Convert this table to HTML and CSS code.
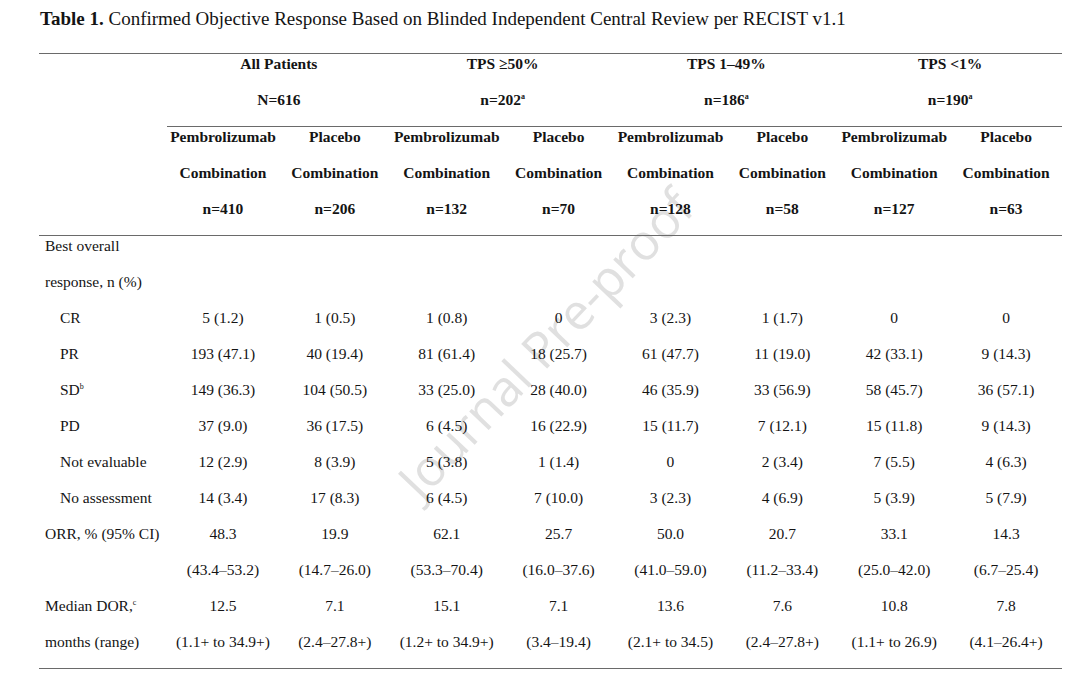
FILE: index.html
```html
<!DOCTYPE html>
<html lang="en">
<head>
<meta charset="utf-8">
<title>Table 1</title>
<link rel="stylesheet" href="styles.css">
</head>
<body>
<div class="page">
  <div class="watermark">Journal Pre-proof</div>
  <div class="title"><b>Table 1.</b> Confirmed Objective Response Based on Blinded Independent Central Review per RECIST v1.1</div>
  <div class="table">
    <div class="rule full"></div>

    <div class="cell label"></div>
    <div class="cell th group">All Patients</div>
    <div class="cell th group">TPS ≥50%</div>
    <div class="cell th group">TPS 1–49%</div>
    <div class="cell th group">TPS &lt;1%</div>

    <div class="cell label"></div>
    <div class="cell th group">N=616</div>
    <div class="cell th group">n=202<sup>a</sup></div>
    <div class="cell th group">n=186<sup>a</sup></div>
    <div class="cell th group">n=190<sup>a</sup></div>

    <div class="rule part"></div>

    <div class="cell label"></div>
    <div class="cell th">Pembrolizumab</div>
    <div class="cell th">Placebo</div>
    <div class="cell th">Pembrolizumab</div>
    <div class="cell th">Placebo</div>
    <div class="cell th">Pembrolizumab</div>
    <div class="cell th">Placebo</div>
    <div class="cell th">Pembrolizumab</div>
    <div class="cell th">Placebo</div>

    <div class="cell label"></div>
    <div class="cell th">Combination</div>
    <div class="cell th">Combination</div>
    <div class="cell th">Combination</div>
    <div class="cell th">Combination</div>
    <div class="cell th">Combination</div>
    <div class="cell th">Combination</div>
    <div class="cell th">Combination</div>
    <div class="cell th">Combination</div>

    <div class="cell label"></div>
    <div class="cell th">n=410</div>
    <div class="cell th">n=206</div>
    <div class="cell th">n=132</div>
    <div class="cell th">n=70</div>
    <div class="cell th">n=128</div>
    <div class="cell th">n=58</div>
    <div class="cell th">n=127</div>
    <div class="cell th">n=63</div>

    <div class="rule full"></div>

    <div class="cell label wide">Best overall</div>
    <div class="cell label wide">response, n (%)</div>

    <div class="cell label sub">CR</div>
    <div class="cell">5 (1.2)</div><div class="cell">1 (0.5)</div><div class="cell">1 (0.8)</div><div class="cell">0</div>
    <div class="cell">3 (2.3)</div><div class="cell">1 (1.7)</div><div class="cell">0</div><div class="cell">0</div>

    <div class="cell label sub">PR</div>
    <div class="cell">193 (47.1)</div><div class="cell">40 (19.4)</div><div class="cell">81 (61.4)</div><div class="cell">18 (25.7)</div>
    <div class="cell">61 (47.7)</div><div class="cell">11 (19.0)</div><div class="cell">42 (33.1)</div><div class="cell">9 (14.3)</div>

    <div class="cell label sub">SD<sup>b</sup></div>
    <div class="cell">149 (36.3)</div><div class="cell">104 (50.5)</div><div class="cell">33 (25.0)</div><div class="cell">28 (40.0)</div>
    <div class="cell">46 (35.9)</div><div class="cell">33 (56.9)</div><div class="cell">58 (45.7)</div><div class="cell">36 (57.1)</div>

    <div class="cell label sub">PD</div>
    <div class="cell">37 (9.0)</div><div class="cell">36 (17.5)</div><div class="cell">6 (4.5)</div><div class="cell">16 (22.9)</div>
    <div class="cell">15 (11.7)</div><div class="cell">7 (12.1)</div><div class="cell">15 (11.8)</div><div class="cell">9 (14.3)</div>

    <div class="cell label sub">Not evaluable</div>
    <div class="cell">12 (2.9)</div><div class="cell">8 (3.9)</div><div class="cell">5 (3.8)</div><div class="cell">1 (1.4)</div>
    <div class="cell">0</div><div class="cell">2 (3.4)</div><div class="cell">7 (5.5)</div><div class="cell">4 (6.3)</div>

    <div class="cell label sub">No assessment</div>
    <div class="cell">14 (3.4)</div><div class="cell">17 (8.3)</div><div class="cell">6 (4.5)</div><div class="cell">7 (10.0)</div>
    <div class="cell">3 (2.3)</div><div class="cell">4 (6.9)</div><div class="cell">5 (3.9)</div><div class="cell">5 (7.9)</div>

    <div class="cell label">ORR, % (95% CI)</div>
    <div class="cell">48.3</div><div class="cell">19.9</div><div class="cell">62.1</div><div class="cell">25.7</div>
    <div class="cell">50.0</div><div class="cell">20.7</div><div class="cell">33.1</div><div class="cell">14.3</div>

    <div class="cell label"></div>
    <div class="cell">(43.4–53.2)</div><div class="cell">(14.7–26.0)</div><div class="cell">(53.3–70.4)</div><div class="cell">(16.0–37.6)</div>
    <div class="cell">(41.0–59.0)</div><div class="cell">(11.2–33.4)</div><div class="cell">(25.0–42.0)</div><div class="cell">(6.7–25.4)</div>

    <div class="cell label">Median DOR,<sup>c</sup></div>
    <div class="cell">12.5</div><div class="cell">7.1</div><div class="cell">15.1</div><div class="cell">7.1</div>
    <div class="cell">13.6</div><div class="cell">7.6</div><div class="cell">10.8</div><div class="cell">7.8</div>

    <div class="cell label">months (range)</div>
    <div class="cell">(1.1+ to 34.9+)</div><div class="cell">(2.4–27.8+)</div><div class="cell">(1.2+ to 34.9+)</div><div class="cell">(3.4–19.4)</div>
    <div class="cell">(2.1+ to 34.5)</div><div class="cell">(2.4–27.8+)</div><div class="cell">(1.1+ to 26.9)</div><div class="cell">(4.1–26.4+)</div>

    <div class="rule full"></div>
  </div>
</div>
</body>
</html>
```
FILE: styles.css
```css
html, body {
  margin: 0;
  padding: 0;
  background: #ffffff;
}

.page {
  position: relative;
  width: 1080px;
  height: 686px;
  overflow: hidden;
  font-family: "Liberation Serif", "Times New Roman", serif;
  color: #141414;
}

.title {
  position: relative;
  height: 53px;
  box-sizing: border-box;
  padding: 9px 0 0 40px;
  font-size: 19px;
  line-height: 20px;
  white-space: nowrap;
}

.table {
  position: relative;
  margin-left: 39px;
  width: 1023px;
  display: grid;
  grid-template-columns: 128px repeat(8, 1fr);
  font-size: 15.5px;
}

.rule {
  height: 1px;
  background: #6a6a6a;
}

.rule.full {
  grid-column: 1 / -1;
}

.rule.part {
  grid-column: 2 / -1;
}

.cell {
  height: 36px;
  line-height: 20px;
  text-align: center;
  white-space: nowrap;
}

.th {
  font-weight: bold;
}

.group {
  grid-column: span 2;
}

.label {
  text-align: left;
  padding-left: 6px;
}

.label.wide {
  grid-column: 1 / -1;
}

.label.sub {
  padding-left: 21px;
}

sup {
  font-size: 8px;
  line-height: 0;
  vertical-align: 6px;
}

.watermark {
  position: absolute;
  left: 545px;
  top: 343px;
  transform: translate(-50%, -50%) rotate(-46.5deg);
  font-family: "Open Sans", "Liberation Sans", sans-serif;
  font-size: 50px;
  color: #e0e0e0;
  white-space: nowrap;
  pointer-events: none;
}
```
